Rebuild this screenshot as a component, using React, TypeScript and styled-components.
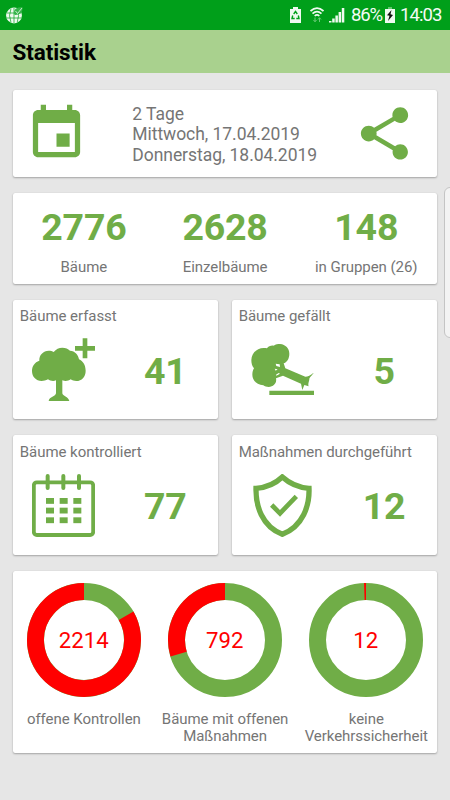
import React from "react";
import styled, { createGlobalStyle } from "styled-components";

const GREEN = "#70ad47";
const RED = "#ff0000";
const GREY = "#757575";

const GlobalStyle = createGlobalStyle`
  *, *::before, *::after { box-sizing: border-box; }
  body {
    margin: 0;
    background: #e6e6e6;
    font-family: Roboto, sans-serif;
  }
`;

const Screen = styled.div`
  position: relative;
  width: 450px;
  height: 800px;
  overflow: hidden;
  background: #e6e6e6;
  color: ${GREY};
`;

const StatusBar = styled.header`
  display: flex;
  align-items: center;
  justify-content: space-between;
  height: 30px;
  padding: 0 9px 0 5px;
  background: #009f1a;
  color: #f4fbf5;
`;

const StatusItems = styled.div`
  display: flex;
  align-items: center;
`;

const StatusText = styled.span<{ $width: number; $tracking: number }>`
  width: ${(p) => p.$width}px;
  font-size: 18.5px;
  line-height: 30px;
  letter-spacing: ${(p) => p.$tracking}px;
  white-space: nowrap;
`;

const StatusIcon = styled.svg<{ $gap: number }>`
  display: block;
  flex: none;
  margin-right: ${(p) => p.$gap}px;
`;

const TitleBar = styled.h1`
  height: 43px;
  margin: 0;
  padding-left: 12.5px;
  background: #a9d18e;
  color: #000;
  font-size: 22.5px;
  font-weight: 700;
  line-height: 44px;
  letter-spacing: -0.1px;
`;

const Content = styled.main`
  display: grid;
  grid-template-rows: 87.5px 90.5px 119.5px 120px 181.5px;
  row-gap: 16px;
  padding: 16.7px 13px 0 13.3px;
`;

const Card = styled.section`
  border-radius: 2px;
  background: #fff;
  box-shadow: 0 1px 2px rgba(0, 0, 0, 0.28), 0 0 1px rgba(0, 0, 0, 0.14);
`;

const PeriodCard = styled(Card)`
  display: grid;
  grid-template-columns: 119px 1fr 96px;
  align-items: start;
  padding-top: 12px;
`;

const PeriodIcon = styled.svg<{ $shift: number }>`
  display: block;
  width: 63px;
  height: 63px;
  margin-left: ${(p) => p.$shift}px;
  fill: ${GREEN};
`;

const PeriodText = styled.div`
  padding-top: 2.2px;
  font-size: 17.5px;
  line-height: 20.5px;
  letter-spacing: -0.05px;
  white-space: nowrap;
`;

const ThreeColumns = styled(Card)`
  display: grid;
  grid-template-columns: repeat(3, 141.2px);
  text-align: center;
`;

const Total = styled.div`
  padding-top: 11.5px;
`;

const BigNumber = styled.div`
  color: ${GREEN};
  font-size: 37.5px;
  font-weight: 700;
  line-height: 44px;
  letter-spacing: -0.25px;
`;

const Caption = styled.div`
  font-size: 15px;
  line-height: 17.5px;
  letter-spacing: -0.05px;
  white-space: nowrap;
`;

const TotalCaption = styled(Caption)`
  margin-top: 10px;
`;

const CardPair = styled.div`
  display: grid;
  grid-template-columns: 1fr 1fr;
  column-gap: 14px;
`;

const ActionCard = styled(Card)`
  padding-top: 8.7px;
`;

const ActionTitle = styled(Caption)`
  padding-left: 6.5px;
`;

const ActionBody = styled.div`
  display: grid;
  grid-template-columns: 99px 1fr;
  padding-top: 12.3px;
`;

const ActionIcon = styled.svg`
  display: block;
  width: 63px;
  height: 63px;
  margin-left: 18.7px;
  fill: ${GREEN};
`;

const ActionNumber = styled(BigNumber)`
  padding-top: 10.6px;
  text-align: center;
`;

const Chart = styled.div`
  display: flex;
  flex-direction: column;
  align-items: center;
  padding-top: 10.8px;
`;

const ChartCaption = styled(Caption)`
  margin-top: 12.8px;
  white-space: pre-line;
`;

const Donut = styled.svg`
  display: block;
  width: 116px;
  height: 116px;
`;

const DonutValue = styled.text`
  fill: ${RED};
  font-size: 22.2px;
  text-anchor: middle;
`;

const EdgeHandle = styled.div`
  position: absolute;
  top: 187px;
  left: 444px;
  width: 14px;
  height: 151px;
  border: 1px solid #c4c4c4;
  border-radius: 6px;
  background: #f3f3f3;
`;

const TreePlusIcon = () => (
  <ActionIcon viewBox="96 144 189 189">
    <path d="M248 145h14v23h23v14h-23v23h-14v-23h-23v-14h23z" />
    <path d="M118 212C117 195 130 182 146 182C152 182 157 183 161 186C168 177 177 173 187 173C197 173 204 176 210 182C225 183 235 194 237 208C249 213 257 226 257 242C257 260 245 273 229 273C222 273 217 271 212 268C205 273 196 274 187 271L187 310C188 318 205 320 208 333H146C148 320 167 320 168 310V271C161 274 151 273 144 268C138 272 131 273 125 273C108 273 96 260 96 243C96 228 104 217 118 212Z" />
  </ActionIcon>
);

const FelledTreeIcon = () => (
  <ActionIcon viewBox="77 144 189 189">
    <path d="M132 302h134v13H132z" />
    <path
      fillRule="evenodd"
      d="M78 210C79 188 96 174 115 174C119 174 122 174 125 175C129 169 137 166 145 167C151 163 158 162 164 162C181 163 192 176 192 191C192 207 184 217 175 220L180 235L240 260C248 260 255 256 265 248C261 256 251 263 252 268C251 276 247 283 250 289L237 285L231 300L227 281L173 257L152 265C155 279 145 290 130 291C124 291 118 289 114 286C95 285 81 271 81 254C81 246 83 240 86 235C80 228 78 219 78 210ZM151 221L153 228L164 231L163 223ZM148 236L151 242L157 238ZM152 254L160 249L164 251L153 257Z"
    />
  </ActionIcon>
);

const DOT_COLUMNS = [138, 179, 220];
const DOT_ROWS = [219, 248, 277];

const CalendarGridIcon = () => (
  <ActionIcon viewBox="96 147 189 189">
    <rect x="101.500" y="172" width="178" height="158" rx="9" fill="none" stroke={GREEN} strokeWidth="11.500" />
    {[143, 190, 237].map((x) => (
      <path key={x} d={`M${x} 153v36`} stroke={GREEN} strokeWidth="12" strokeLinecap="round" />
    ))}
    {DOT_ROWS.map((y) =>
      DOT_COLUMNS.map((x) => <rect key={`${x}-${y}`} x={x} y={y} width="24" height="17.500" />)
    )}
  </ActionIcon>
);

const ShieldIcon = () => (
  <ActionIcon viewBox="77 147 189 189">
    <path
      d="M171 156C152 174 121 188 92 190C91 242 109 303 171 328C233 303 253 242 251 190C222 188 191 174 171 156Z"
      fill="none"
      stroke={GREEN}
      strokeWidth="16"
    />
    <path d="M139 240L164 265L213 214" fill="none" stroke={GREEN} strokeWidth="14" />
  </ActionIcon>
);

const point = (fraction: number, r: number) => {
  const a = fraction * 2 * Math.PI;
  return `${58 + r * Math.sin(a)} ${58 - r * Math.cos(a)}`;
};

const Ring = ({ value, from, to }: { value: number; from: number; to: number }) => (
  <Donut viewBox="0 0 116 116">
    <circle cx="58" cy="58" r="48.500" fill="none" stroke={GREEN} strokeWidth="17" />
    <path
      d={`M${point(from, 48.5)}A48.5 48.5 0 ${to - from > 0.5 ? 1 : 0} 1 ${point(to, 48.5)}`}
      fill="none"
      stroke={RED}
      strokeWidth="17"
    />
    <DonutValue x="57.700" y="66">
      {value}
    </DonutValue>
  </Donut>
);

const totals = [
  { value: 2776, label: "Bäume" },
  { value: 2628, label: "Einzelbäume" },
  { value: 148, label: "in Gruppen (26)" },
];

const charts = [
  { value: 2214, from: 0.167, to: 1, label: "offene Kontrollen" },
  { value: 792, from: 0.703, to: 1, label: "Bäume mit offenen\nMaßnahmen" },
  { value: 12, from: 0.9945, to: 1, label: "keine\nVerkehrssicherheit" },
];

const actionRows = [
  [
    { title: "Bäume erfasst", value: 41, Icon: TreePlusIcon },
    { title: "Bäume gefällt", value: 5, Icon: FelledTreeIcon },
  ],
  [
    { title: "Bäume kontrolliert", value: 77, Icon: CalendarGridIcon },
    { title: "Maßnahmen durchgeführt", value: 12, Icon: ShieldIcon },
  ],
];

const GlobeIcon = () => (
  <StatusIcon $gap={0} width="19" height="18" viewBox="0 0 19 18">
    <circle cx="9" cy="9.500" r="7.900" fill="#effaf0" />
    <path
      d="M1.500 7h15M1.500 12h15M9 2v15.500M6 2.500Q3 9.500 6 16.500M12.200 2.500Q15 9.500 12.200 16.500"
      fill="none"
      stroke="#009f1a"
      strokeWidth="0.700"
    />
    <path d="M9 8Q8 1 17.500 1Q18 9 10 9Z" fill="#35b54a" />
    <path d="M10.500 5l2 2.500L17 2" fill="none" stroke="#d9f2dc" strokeWidth="0.900" />
  </StatusIcon>
);

export default function App() {
  return (
    <>
      <GlobalStyle />
      <Screen>
        <StatusBar>
          <GlobeIcon />
          <StatusItems>
            <StatusIcon $gap={9} width="11" height="16" viewBox="0 0 11 16">
              <path d="M3 0h5v2h3v14H0V2h3z" fill="#effaf0" />
              <path
                d="M3.700 7L5.500 4.500L7.300 7M8.300 8.500L9 11.500H6.300M4.700 11.500H2L2.700 8.500"
                fill="none"
                stroke="#009f1a"
                strokeWidth="1.400"
              />
            </StatusIcon>
            <StatusIcon $gap={5} width="14" height="16" viewBox="0 0 14 16">
              <path
                d="M0.500 4Q7-1.800 13.500 4M2.500 6.600Q7 2.500 11.500 6.600M4.700 9Q7 6.800 9.300 9"
                fill="none"
                stroke="#effaf0"
                strokeWidth="1.700"
              />
              <path d="M5 10.500v4M3.500 13L5 14.800L6.500 13M9.500 15v-4M8 12.500L9.500 10.700L11 12.500" fill="none" stroke="#6bca78" />
            </StatusIcon>
            <StatusIcon $gap={6} width="16" height="16" viewBox="0 0 16 16">
              <path d="M0 15.500v-1.500h2.500v1.500zM3.200 15.500v-4h2.500v4zM6.400 15.500v-7h2.500v7zM9.600 15.500v-10.500h2.500v10.500zM12.800 15.500V1h2.500v14.500z" fill="#effaf0" />
            </StatusIcon>
            <StatusText $width={34} $tracking={-1.2}>86%</StatusText>
            <StatusIcon $gap={5} width="10" height="16" viewBox="0 0 10 16">
              <path d="M3 0h4v2h3v14H0V2h3z" fill="#effaf0" />
              <path d="M3 0h4v2H3z" fill="#65c770" />
              <path d="M6.500 3L2 8.200L4.500 8.800L3 14L8 8L5.500 7.300Z" fill="#111" />
            </StatusIcon>
            <StatusText $width={41} $tracking={-0.9}>14:03</StatusText>
          </StatusItems>
        </StatusBar>
        <TitleBar>Statistik</TitleBar>
        <Content>
          <PeriodCard>
            <PeriodIcon $shift={12.2} viewBox="0 0 24 24">
              <path d="M17 12h-5v5h5v-5zM16 1v2H8V1H6v2H5c-1.110 0-1.990.9-1.990 2L3 19c0 1.100.89 2 2 2h14c1.100 0 2-.9 2-2V5c0-1.100-.9-2-2-2h-1V1h-2zm3 18H5V8h14v11z" />
            </PeriodIcon>
            <PeriodText>
              <div>2 Tage</div>
              <div>Mittwoch, 17.04.2019</div>
              <div>Donnerstag, 18.04.2019</div>
            </PeriodText>
            <PeriodIcon $shift={12} viewBox="0 0 24 24">
              <path d="M18 16.080c-.76 0-1.440.3-1.960.77L8.910 12.700c.05-.23.09-.46.09-.7s-.04-.47-.09-.7l7.050-4.110c.54.5 1.250.81 2.040.81 1.660 0 3-1.340 3-3s-1.340-3-3-3-3 1.340-3 3c0 .24.04.47.09.7L8.040 9.810C7.500 9.310 6.790 9 6 9c-1.660 0-3 1.340-3 3s1.340 3 3 3c.79 0 1.500-.31 2.040-.81l7.120 4.160c-.05.21-.08.43-.08.65 0 1.610 1.310 2.920 2.920 2.920s2.920-1.310 2.920-2.920-1.310-2.920-2.920-2.920z" />
            </PeriodIcon>
          </PeriodCard>
          <ThreeColumns>
            {totals.map((t) => (
              <Total key={t.label}>
                <BigNumber>{t.value}</BigNumber>
                <TotalCaption>{t.label}</TotalCaption>
              </Total>
            ))}
          </ThreeColumns>
          {actionRows.map((row) => (
            <CardPair key={row[0].title}>
              {row.map(({ title, value, Icon }) => (
                <ActionCard key={title}>
                  <ActionTitle>{title}</ActionTitle>
                  <ActionBody>
                    <Icon />
                    <ActionNumber>{value}</ActionNumber>
                  </ActionBody>
                </ActionCard>
              ))}
            </CardPair>
          ))}
          <ThreeColumns>
            {charts.map((c) => (
              <Chart key={c.label}>
                <Ring value={c.value} from={c.from} to={c.to} />
                <ChartCaption>{c.label}</ChartCaption>
              </Chart>
            ))}
          </ThreeColumns>
        </Content>
        <EdgeHandle />
      </Screen>
    </>
  );
}
